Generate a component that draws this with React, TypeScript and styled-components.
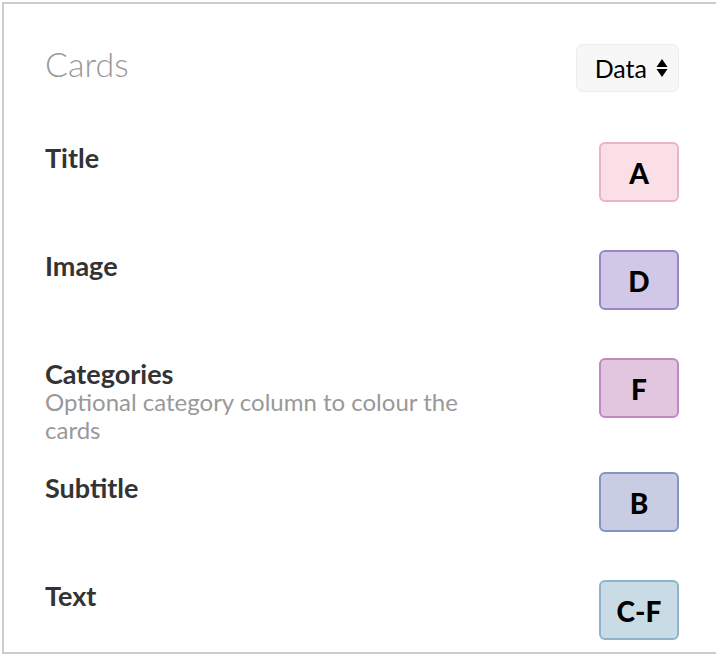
import styled, { createGlobalStyle } from "styled-components";

const GlobalStyle = createGlobalStyle`
  html, body {
    margin: 0;
    padding: 0;
    background: #fff;
    overflow: hidden;
  }
  body {
    font-family: Lato, "Liberation Sans", sans-serif;
    color: #333;
  }
`;

type Binding = {
  label: string;
  description?: string;
  column: string;
  bg: string;
  border: string;
};

const bindings: Binding[] = [
  { label: "Title", column: "A", bg: "#fbdfe6", border: "#ebb3c4" },
  { label: "Image", column: "D", bg: "#d0c8e6", border: "#9587c8" },
  {
    label: "Categories",
    description: "Optional category column to colour the cards",
    column: "F",
    bg: "#e2c6e0",
    border: "#bf8abf",
  },
  { label: "Subtitle", column: "B", bg: "#c9cde4", border: "#8593c6" },
  { label: "Text", column: "C-F", bg: "#c9dce6", border: "#8fb3ca" },
];

export default function App() {
  return (
    <>
      <GlobalStyle />
      <Panel>
        <Header>
          <Heading>Cards</Heading>
          <Select>
            Data
            <SortIcon width="12" height="20" viewBox="0 0 12 20">
              <path d="M6 1 L11.5 9 H0.5 Z" fill="#000" />
              <path d="M6 19 L11.5 11 H0.5 Z" fill="#000" />
            </SortIcon>
          </Select>
        </Header>
        {bindings.map(b => (
          <Row key={b.label}>
            <Info>
              <Label>{b.label}</Label>
              {b.description && <Description>{b.description}</Description>}
            </Info>
            <ColumnBadge $bg={b.bg} $border={b.border}>
              {b.column}
            </ColumnBadge>
          </Row>
        ))}
      </Panel>
    </>
  );
}

const Panel = styled.div`
  box-sizing: border-box;
  margin: 2px 0 0 2px;
  width: 714px;
  height: 652px;
  border: 2px solid #cccccc;
  border-right: none;
  padding: 40px 37px 0 41px;
`;

const Header = styled.div`
  display: flex;
  align-items: center;
  justify-content: space-between;
  height: 48px;
  margin-bottom: 50px;
`;

const Heading = styled.h2`
  margin: 0;
  font-size: 34px;
  font-weight: 300;
  color: #999;
  line-height: 1;
  position: relative;
  top: -4px;
`;

const Select = styled.div`
  box-sizing: border-box;
  display: flex;
  align-items: center;
  gap: 9px;
  height: 48px;
  padding: 0 10px 0 18px;
  background: #f7f7f7;
  border: 1px solid #ececec;
  border-radius: 7px;
  font-size: 25px;
  color: #000;
`;

const SortIcon = styled.svg`
  display: block;
`;

const Row = styled.div`
  display: flex;
  align-items: flex-start;
  justify-content: space-between;
`;

const Info = styled.div`
  max-width: 450px;
  padding-bottom: 28px;
`;

const Label = styled.div`
  font-size: 27px;
  font-weight: 700;
  line-height: 30px;
  color: #333;
  padding-top: 1px;
`;

const Description = styled.div`
  font-size: 24px;
  line-height: 28px;
  margin-top: -1px;
  color: #999;
`;

const ColumnBadge = styled.div<{ $bg: string; $border: string }>`
  box-sizing: border-box;
  width: 80px;
  height: 60px;
  margin-bottom: 48px;
  display: flex;
  align-items: center;
  justify-content: center;
  padding-top: 2px;
  background: ${p => p.$bg};
  border: 2px solid ${p => p.$border};
  border-radius: 6px;
  font-size: 28px;
  font-weight: 900;
  color: #000;
`;
